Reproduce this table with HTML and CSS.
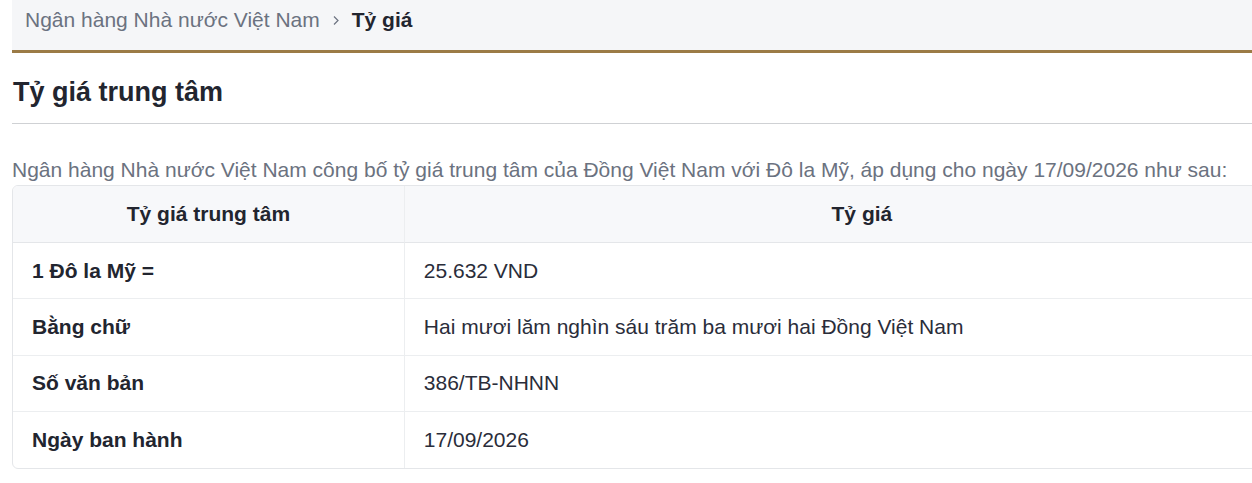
FILE: index.html
```html
<!DOCTYPE html>
<html lang="vi">
<head>
<meta charset="utf-8">
<title>Tỷ giá trung tâm</title>
<link rel="stylesheet" href="styles.css">
</head>
<body>
<div class="page">
  <nav class="breadcrumb">
    <span class="crumb">Ngân hàng Nhà nước Việt Nam</span>
    <svg class="sep" width="8" height="11" viewBox="0 0 8 11"><path d="M2 1.5 L6 5.5 L2 9.5" fill="none" stroke="#6b7280" stroke-width="1.2"/></svg>
    <span class="crumb active">Tỷ giá</span>
  </nav>
  <h1 class="title">Tỷ giá trung tâm</h1>
  <p class="intro">Ngân hàng Nhà nước Việt Nam công bố tỷ giá trung tâm của Đồng Việt Nam với Đô la Mỹ, áp dụng cho ngày 17/09/2026 như sau:</p>
  <table class="rate">
    <colgroup><col class="col1"><col class="col2"></colgroup>
    <thead>
      <tr><th>Tỷ giá trung tâm</th><th>Tỷ giá</th></tr>
    </thead>
    <tbody>
      <tr><td class="label">1 Đô la Mỹ =</td><td>25.632 VND</td></tr>
      <tr><td class="label">Bằng chữ</td><td>Hai mươi lăm nghìn sáu trăm ba mươi hai Đồng Việt Nam</td></tr>
      <tr><td class="label">Số văn bản</td><td>386/TB-NHNN</td></tr>
      <tr><td class="label">Ngày ban hành</td><td>17/09/2026</td></tr>
    </tbody>
  </table>
</div>
</body>
</html>
```

FILE: styles.css
```css
html, body {
  margin: 0;
  padding: 0;
  overflow: hidden;
  background: #ffffff;
}
body {
  font-family: "Liberation Sans", Arial, sans-serif;
  color: #2a2d3a;
}
.page {
  margin-left: 12px;
  width: 1308px;
}
.breadcrumb {
  display: flex;
  gap: 12px;
  height: 42px;
  padding: 8px 13px 0 13px;
  align-items: flex-start;
  background: #f5f6f8;
  border-bottom: 3px solid #9b7b46;
  font-size: 21px;
}
.crumb {
  color: #6b7280;
  line-height: 24px;
}
.crumb.active {
  color: #22252f;
  font-weight: bold;
}
.sep {
  margin-top: 7px;
}
.title {
  margin: 24px 0 0 0;
  padding: 0 0 15px 1px;
  font-size: 27px;
  line-height: 31px;
  font-weight: bold;
  color: #22252f;
  border-bottom: 1px solid #cfd1d4;
}
.intro {
  margin: 34px 0 3px 0;
  font-size: 21px;
  line-height: 24px;
  color: #6b7280;
  white-space: nowrap;
}
.rate {
  width: 100%;
  border-collapse: separate;
  border-spacing: 0;
  border: 1px solid #e4e6e9;
  border-radius: 6px;
  font-size: 21px;
  table-layout: fixed;
}
.rate .col1 {
  width: 30%;
}
.rate th {
  background: #f7f8fa;
  font-weight: bold;
  color: #22252f;
  text-align: center;
  height: 56px;
  padding: 0 20px;
  border-bottom: 1px solid #e4e6e9;
}
.rate th:first-child {
  border-top-left-radius: 5px;
}
.rate td {
  height: 55.4px;
  padding: 0 19px;
  border-bottom: 1px solid #eceef0;
  color: #2a2d3a;
  text-align: left;
}
.rate tr:last-child td {
  border-bottom: none;
}
.rate th:first-child,
.rate td:first-child {
  border-right: 1px solid #eceef0;
}
.rate td.label {
  font-weight: bold;
  color: #22252f;
}
```
